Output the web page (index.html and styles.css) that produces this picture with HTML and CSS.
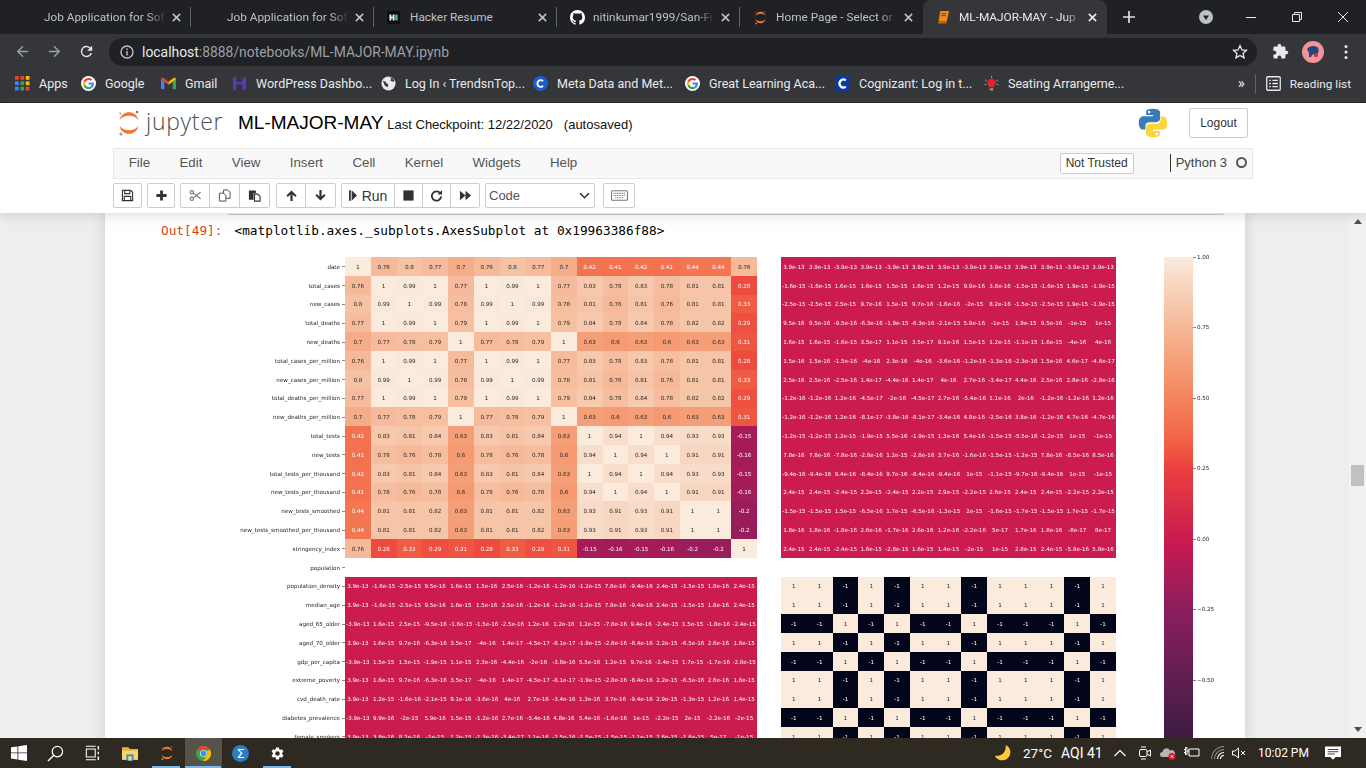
FILE: index.html
```html
<!DOCTYPE html>
<html lang="en">
<head>
<meta charset="utf-8">
<title>ML-MAJOR-MAY - Jupyter Notebook</title>
<link rel="stylesheet" href="styles.css">
</head>
<body>
<svg class="sprite" aria-hidden="true">
  <symbol id="x" viewBox="0 0 12 12"><path d="M2 2l8 8M10 2l-8 8" fill="none" stroke="currentColor" stroke-width="1.7"/></symbol>
  <symbol id="jlogo" viewBox="0 0 24 28"><path d="M2.500 11C4 5.200 8 3.200 12 3.200s8 2 9.500 7.800C19 8 16 6.800 12 6.800S5 8 2.500 11zM2.500 17C4 22.800 8 24.800 12 24.800s8-2 9.500-7.800C19 20 16 21.200 12 21.200S5 20 2.500 17z" fill="#f37726"/><circle cx="20" cy="3" r="1.300" fill="#767677"/><circle cx="3.300" cy="4.500" r=".9" fill="#989798"/><circle cx="4" cy="25" r="1.600" fill="#9e9e9e"/></symbol>
  <symbol id="g" viewBox="-3 -3 24 24"><circle cx="9" cy="9" r="12" fill="#fff"/><path fill="#EA4335" d="M9 3.480c1.690 0 2.830.73 3.480 1.340l2.540-2.480C13.460.89 11.430 0 9 0 5.480 0 2.440 2.020.96 4.960l2.910 2.260C4.600 5.050 6.620 3.480 9 3.480z"/><path fill="#4285F4" d="M17.640 9.200c0-.74-.06-1.280-.19-1.840H9v3.340h4.960c-.1.83-.64 2.080-1.840 2.920l2.840 2.200c1.700-1.570 2.680-3.880 2.680-6.620z"/><path fill="#FBBC05" d="M3.880 10.780A5.540 5.540 0 0 1 3.580 9c0-.62.11-1.220.29-1.780L.96 4.960A9 9 0 0 0 0 9c0 1.450.35 2.820.96 4.040l2.920-2.260z"/><path fill="#34A853" d="M9 18c2.430 0 4.470-.8 5.960-2.180l-2.840-2.200c-.76.53-1.780.9-3.120.9-2.380 0-4.400-1.570-5.120-3.740L.98 13.040C2.460 15.980 5.480 18 9 18z"/></symbol>
  <symbol id="bluec" viewBox="0 0 16 16"><circle cx="8" cy="8" r="8" fill="#1a5fd0"/><path d="M10.800 5.400A3.600 3.600 0 1 0 10.800 10.600" fill="none" stroke="#fff" stroke-width="2"/></symbol>
  <symbol id="gear" viewBox="0 0 24 24"><path fill="currentColor" fill-rule="evenodd" d="M19.140 12.940c.04-.3.06-.61.06-.94 0-.32-.02-.64-.07-.94l2.030-1.580a.49.49 0 0 0 .12-.61l-1.920-3.320a.488.488 0 0 0-.59-.22l-2.390.96c-.5-.38-1.030-.7-1.620-.94l-.36-2.540a.484.484 0 0 0-.48-.41h-3.840c-.24 0-.43.17-.47.41l-.36 2.540c-.59.24-1.130.57-1.620.94l-2.390-.96c-.22-.08-.47 0-.59.22L2.740 8.870c-.12.21-.08.47.12.61l2.030 1.580c-.05.3-.09.63-.09.94s.02.64.07.94l-2.030 1.580a.49.49 0 0 0-.12.61l1.920 3.320c.12.22.37.29.59.22l2.390-.96c.5.38 1.030.7 1.620.94l.36 2.540c.05.24.24.41.48.41h3.840c.24 0 .44-.17.47-.41l.36-2.540c.59-.24 1.130-.56 1.620-.94l2.390.96c.22.08.47 0 .59-.22l1.920-3.320c.12-.22.07-.47-.12-.61l-2.010-1.580zM12 15.600A3.600 3.600 0 1 1 12 8.400a3.600 3.600 0 0 1 0 7.200z"/></symbol>
</svg>

<header class="chrome">
  <div class="tabs">
    <div class="tab"><span class="tab-ico"></span><span class="tab-title">Job Application for Sof</span><svg class="tab-x"><use href="#x"/></svg></div><i class="tab-sep"></i>
    <div class="tab"><span class="tab-ico"></span><span class="tab-title">Job Application for Sof</span><svg class="tab-x"><use href="#x"/></svg></div><i class="tab-sep"></i>
    <div class="tab"><span class="tab-ico"><svg class="ico13" viewBox="0 0 13 13"><rect width="13" height="13" rx="1" fill="#0b0e13"/><path d="M2.500 3.500h1.800v2.200h1.400V3.500h1.800v6H5.700V7.300H4.300v2.200H2.500z" fill="#fff"/><rect x="8.200" y="3.500" width="2.400" height="6" fill="#2fd173"/></svg></span><span class="tab-title nofade">Hacker Resume</span><svg class="tab-x"><use href="#x"/></svg></div><i class="tab-sep"></i>
    <div class="tab"><span class="tab-ico"><svg class="ico16" viewBox="0 0 16 16"><path fill="#fff" d="M8 0C3.580 0 0 3.580 0 8c0 3.540 2.290 6.530 5.470 7.590.4.07.55-.17.55-.38 0-.19-.01-.82-.01-1.490-2.010.37-2.530-.49-2.690-.94-.09-.23-.48-.94-.82-1.130-.28-.15-.68-.52-.01-.53.63-.01 1.080.58 1.230.82.72 1.210 1.870.87 2.330.66.07-.52.28-.87.51-1.070-1.780-.2-3.640-.89-3.640-3.950 0-.87.31-1.590.82-2.150-.08-.2-.36-1.020.08-2.120 0 0 .67-.21 2.200.82.64-.18 1.320-.27 2-.27s1.360.09 2 .27c1.530-1.040 2.200-.82 2.200-.82.44 1.100.16 1.920.08 2.120.51.56.82 1.270.82 2.150 0 3.070-1.870 3.750-3.650 3.950.29.25.54.73.54 1.480 0 1.070-.01 1.930-.01 2.200 0 .21.15.46.55.38A8.013 8.013 0 0 0 16 8c0-4.420-3.580-8-8-8z"/></svg></span><span class="tab-title">nitinkumar1999/San-Fr</span><svg class="tab-x"><use href="#x"/></svg></div><i class="tab-sep"></i>
    <div class="tab"><span class="tab-ico"><svg class="ico16" viewBox="0 0 24 28"><use href="#jlogo"/></svg></span><span class="tab-title">Home Page - Select or</span><svg class="tab-x"><use href="#x"/></svg></div>
    <div class="tab tab-active"><span class="tab-ico"><svg class="ico16" viewBox="0 0 16 16"><path d="M4.500 1h9.500l-2.500 11H2.800z" fill="#f08a1d"/><path d="M2.800 12h8.700l-.5 2.500H3.200a1.300 1.300 0 0 1-.4-2.500z" fill="#c9660e"/><path d="M6 4h5M5.600 6h5" stroke="#5b2c00" stroke-width=".8"/></svg></span><span class="tab-title">ML-MAJOR-MAY - Jup</span><svg class="tab-x"><use href="#x"/></svg></div>
    <svg class="new-tab" viewBox="0 0 12 12"><path d="M6 0v12M0 6h12" stroke="#dee1e6" stroke-width="1.700"/></svg>
    <div class="win">
      <svg class="tab-circle" viewBox="0 0 14 14"><circle cx="7" cy="7" r="7" fill="#bdc1c6"/><path d="M4 5.500h6L7 10z" fill="#202124"/></svg>
      <svg class="win-btn" viewBox="0 0 12 12"><path d="M1 6.500h10" stroke="#e8eaed"/></svg>
      <svg class="win-btn" viewBox="0 0 12 12"><path d="M1.500 3.500h7v7h-7zM3.500 3.500v-2h7v7h-2" fill="none" stroke="#e8eaed"/></svg>
      <svg class="win-btn" viewBox="0 0 12 12"><path d="M1 1l10 10M11 1L1 11" stroke="#e8eaed"/></svg>
    </div>
  </div>
  <div class="navbar">
    <svg class="nav-ico" viewBox="0 0 24 24"><path fill="#9aa0a6" d="M20 11H7.800l5.600-5.600L12 4l-8 8 8 8 1.400-1.400L7.800 13H20z"/></svg>
    <svg class="nav-ico" viewBox="0 0 24 24"><path fill="#9aa0a6" d="M4 11h12.200l-5.600-5.600L12 4l8 8-8 8-1.400-1.400 5.600-5.600H4z"/></svg>
    <svg class="nav-ico" viewBox="0 0 24 24"><path fill="#e8eaed" d="M17.650 6.350A7.950 7.950 0 0 0 12 4a8 8 0 1 0 7.750 10h-2.080A6 6 0 1 1 12 6c1.660 0 3.140.69 4.220 1.780L13 11h7V4z"/></svg>
    <div class="addr">
      <svg class="info" viewBox="0 0 14 14"><circle cx="7" cy="7" r="6" fill="none" stroke="#bdc1c6" stroke-width="1.400"/><path d="M6.300 6h1.400v4.500H6.300zM6.300 3.400h1.400v1.500H6.300z" fill="#bdc1c6"/></svg>
      <span class="url"><b>localhost</b>:8888/notebooks/ML-MAJOR-MAY.ipynb</span>
      <svg class="star" viewBox="0 0 16 16"><path d="M8 1.600l1.900 4.300 4.600.4-3.500 3.100 1.100 4.500L8 11.500l-4.100 2.400L5 9.400 1.500 6.300l4.600-.4z" fill="none" stroke="#e8eaed" stroke-width="1.300"/></svg>
    </div>
    <svg class="puzzle" viewBox="0 0 24 24"><path fill="#e8eaed" d="M20.500 11H19V7a2 2 0 0 0-2-2h-4V3.500a2.500 2.500 0 0 0-5 0V5H4a2 2 0 0 0-2 2v3.800h1.500a2.700 2.700 0 0 1 0 5.400H2V20a2 2 0 0 0 2 2h3.800v-1.500a2.700 2.700 0 0 1 5.400 0V22H17a2 2 0 0 0 2-2v-4h1.500a2.500 2.500 0 0 0 0-5z"/></svg>
    <svg class="avatar" viewBox="0 0 22 22"><circle cx="11" cy="11" r="11" fill="#f4939a"/><path d="M5 8c2-3 7-4 10-2 2 1 2 4 1 6l-1 4h-2l-1-3-2 1-1 2H7V12z" fill="#23467d"/><circle cx="14" cy="14" r="2" fill="#c9334a"/></svg>
    <svg class="dots" viewBox="0 0 4 16"><circle cx="2" cy="2.500" r="1.500" fill="#e8eaed"/><circle cx="2" cy="8" r="1.500" fill="#e8eaed"/><circle cx="2" cy="13.500" r="1.500" fill="#e8eaed"/></svg>
  </div>
  <nav class="bookmarks">
    <a class="bm"><svg class="bm-ico" viewBox="0 0 14 14"><path d="M0 0h3.500v3.500H0z" fill="#ea4335"/><path d="M5 0h3.500v3.500H5z" fill="#ea4335"/><path d="M10 0h3.500v3.500H10z" fill="#fbbc05"/><path d="M0 5h3.500v3.500H0z" fill="#4285f4"/><path d="M5 5h3.500v3.500H5z" fill="#34a853"/><path d="M10 5h3.500v3.500H10z" fill="#fbbc05"/><path d="M0 10h3.500v3.500H0z" fill="#4285f4"/><path d="M5 10h3.500v3.500H5z" fill="#34a853"/><path d="M10 10h3.500v3.500H10z" fill="#ea4335"/></svg>Apps</a>
    <a class="bm"><svg class="bm-ico"><use href="#g"/></svg>Google</a>
    <a class="bm"><svg class="bm-ico" viewBox="0 0 16 14"><path d="M0 2.500L3.500 5v8H1a1 1 0 0 1-1-1z" fill="#4285f4"/><path d="M16 2.500L12.500 5v8H15a1 1 0 0 0 1-1z" fill="#34a853"/><path d="M3.500 5L8 8.400V5.200L3 1.400C1.500.4 0 1.200 0 2.500z" fill="#ea4335"/><path d="M12.500 5L8 8.400V5.200l5-3.800c1.500-1 3-.2 3 1.100z" fill="#fbbc05"/></svg>Gmail</a>
    <a class="bm"><svg class="bm-ico" viewBox="0 0 16 16"><path d="M1 2l3.500-1.500v6H11V3l4-2v13l-4 1.500V9H4.500v5L1 15.500z" fill="#5b3bb3"/></svg>WordPress Dashbo...</a>
    <a class="bm"><svg class="bm-ico" viewBox="0 0 16 16"><circle cx="8" cy="8" r="7.500" fill="#e8eaed"/><path d="M2 5l3 1 1 2 2 1-1 3-3-2zM9 1l2 2-1 2 3 1 1.500-1L12 2z" fill="#35363a"/></svg>Log In ‹ TrendsnTop...</a>
    <a class="bm"><svg class="bm-ico"><use href="#bluec"/></svg>Meta Data and Met...</a>
    <a class="bm"><svg class="bm-ico"><use href="#g"/></svg>Great Learning Aca...</a>
    <a class="bm"><svg class="bm-ico" viewBox="0 0 16 16"><rect width="16" height="16" fill="#0d3a9c"/><path d="M11.500 4.600A4.200 4.200 0 1 0 11.500 11.400" fill="none" stroke="#fff" stroke-width="2.400"/></svg>Cognizant: Log in t...</a>
    <a class="bm"><svg class="bm-ico" viewBox="0 0 16 16"><path d="M8 0v2M1 4l2 1.500M15 4l-2 1.500M.5 9h2M13.500 9h2" stroke="#9aa0a6"/><path d="M8 3a4.500 4.500 0 0 1 2.500 8.200V12h-5v-.8A4.500 4.500 0 0 1 8 3z" fill="#e8202a"/><path d="M6 13h4v2.500H6z" fill="#8a8f94"/></svg>Seating Arrangeme...</a>
    <div class="bm-end">
      <span class="more">»</span><i class="bm-div"></i>
      <a class="bm bm-read"><svg class="bm-ico" viewBox="0 0 14 14"><rect x=".7" y=".7" width="12.600" height="12.600" rx="1" fill="none" stroke="#e8eaed" stroke-width="1.200"/><path d="M3 4h1.500M6 4h5M3 7h1.500M6 7h5M3 10h1.500M6 10h5" stroke="#e8eaed" stroke-width="1.200"/></svg>Reading list</a>
    </div>
  </nav>
</header>

<div class="jp-head">
  <div class="jp-top">
    <svg class="jp-logo"><use href="#jlogo"/></svg>
    <span class="jp-word">jupyter</span>
    <span class="nb-name">ML-MAJOR-MAY</span>
    <span class="nb-ck">Last Checkpoint: 12/22/2020</span>
    <span class="nb-auto">(autosaved)</span>
    <svg class="py-logo" viewBox="0 0 110 110"><path fill="#3a7ab5" d="M54 3C28 3 30 14 30 14v12h25v4H20S3 28 3 54s15 25 15 25h9V67s-.5-15 15-15h25s14 .2 14-14V17S83 3 54 3z"/><circle cx="41" cy="15" r="4.500" fill="#fff"/><path fill="#ffd43b" d="M56 107c26 0 24-11 24-11V84H55v-4h35s17 2 17-24-15-25-15-25h-9v12s.5 15-15 15H43s-14-.2-14 14v21s-2 14 27 14z"/><circle cx="69" cy="95" r="4.500" fill="#fff"/></svg>
    <button class="logout">Logout</button>
  </div>
  <div class="jp-menu">
    <span class="mi">File</span><span class="mi">Edit</span><span class="mi">View</span><span class="mi">Insert</span><span class="mi">Cell</span><span class="mi">Kernel</span><span class="mi">Widgets</span><span class="mi">Help</span>
    <span class="trust">Not Trusted</span>
    <span class="kernel">Python 3</span>
    <i class="k-dot"></i>
  </div>
  <div class="jp-tools">
    <div class="grp"><span class="tb w29"><svg class="ti" viewBox="0 0 14 14"><path d="M1.500 1.500h9l2 2v9h-11zM4 1.500v3.500h5.500V1.500M3.500 12.500V8h7v4.500" fill="none" stroke="#333" stroke-width="1.200"/></svg></span></div>
    <div class="grp"><span class="tb w28"><svg class="ti" viewBox="0 0 14 14"><path d="M5.500 1.500h3v4h4v3h-4v4h-3v-4h-4v-3h4z" fill="#333"/></svg></span></div>
    <div class="grp grp-edit">
      <span class="tb w30"><svg class="ti" viewBox="0 0 14 14"><g fill="none" stroke="#777" stroke-width="1.200"><circle cx="3" cy="3.500" r="1.800"/><circle cx="3" cy="10.500" r="1.800"/><path d="M4.500 4.500l8 6M4.500 9.500l8-6"/></g></svg></span>
      <span class="tb w30"><svg class="ti" viewBox="0 0 14 14"><path d="M6 1h4.500L13 3.500V10H6z" fill="#fff" stroke="#444"/><path d="M1.500 4.500H6L8.500 7v6h-7z" fill="#fff" stroke="#444"/></svg></span>
      <span class="tb w30"><svg class="ti" viewBox="0 0 14 14"><path d="M1 1.500h7.500v3H6v7H1z" fill="#333"/><path d="M7 5.500h3.500L13 8v5H7z" fill="#fff" stroke="#333" stroke-width="1.200"/></svg></span>
    </div>
    <div class="grp">
      <span class="tb w30"><svg class="ti" viewBox="0 0 14 14"><path d="M7 1.500L1.500 7l1.600 1.600L5.800 6v7h2.400V6l2.700 2.600L12.500 7z" fill="#333"/></svg></span>
      <span class="tb w30"><svg class="ti" viewBox="0 0 14 14"><path d="M7 12.500L1.500 7l1.600-1.600L5.800 8V1h2.400v7l2.700-2.600L12.500 7z" fill="#333"/></svg></span>
    </div>
    <div class="grp">
      <span class="tb w54 tb-run"><svg class="ti-run" viewBox="0 0 9 12"><path d="M0 0h2v12H0zM3 0l6 6-6 6z" fill="#333"/></svg>Run</span>
      <span class="tb w28"><svg class="ti" viewBox="0 0 14 14"><path d="M1.500 1.500h11v11h-11z" fill="#333"/></svg></span>
      <span class="tb w28"><svg class="ti" viewBox="0 0 14 14"><path d="M11 4.500A5 5 0 1 0 12 8" fill="none" stroke="#333" stroke-width="2"/><path d="M13 1v5H8z" fill="#333"/></svg></span>
      <span class="tb w29"><svg class="ti" viewBox="0 0 14 14"><path d="M1 2l6 5-6 5zM7 2l6 5-6 5z" fill="#333"/></svg></span>
    </div>
    <div class="grp"><div class="sel"><span>Code</span><svg class="chev" viewBox="0 0 12 8"><path d="M1 1.500l5 5 5-5" fill="none" stroke="#333" stroke-width="1.800"/></svg></div></div>
    <div class="grp grp-kb"><span class="tb w32"><svg class="ti-kb" viewBox="0 0 16 10"><rect x=".5" y=".5" width="15" height="9" rx="1" fill="none" stroke="#777"/><path d="M2.500 3h11M2.500 5h11M4 7.200h8" stroke="#777" stroke-dasharray="1 .6"/></svg></span></div>
  </div>
</div>

<main class="site">
  <div class="nb">
    <div class="prev-input"></div>
    <div class="out-row"><span class="prompt">Out[49]:</span><span class="out-text">&lt;matplotlib.axes._subplots.AxesSubplot at 0x19963386f88&gt;</span></div>
    <div class="figure">
      <div class="heat" id="heat"></div>
      <div class="cbar-wrap">
        <div class="cbar"></div>
        <div class="cticks">
          <span class="ct">1.00</span><span class="ct">0.75</span><span class="ct">0.50</span><span class="ct">0.25</span><span class="ct">0.00</span><span class="ct">−0.25</span><span class="ct">−0.50</span>
        </div>
      </div>
    </div>
  </div>
  <div class="scroll">
    <svg class="sc-arrow" viewBox="0 0 8 5"><path d="M4 0l4 5H0z" fill="#505050"/></svg>
    <div class="sc-track"><div class="sc-thumb"></div></div>
    <svg class="sc-arrow" viewBox="0 0 8 5"><path d="M4 5l4-5H0z" fill="#505050"/></svg>
  </div>
</main>

<footer class="task">
  <div class="t-left">
    <span class="ts"><svg class="t-win" viewBox="0 0 16 16"><path d="M0 2.300l6.500-.9v6.100H0zM7.300 1.300L16 0v7.500H7.300zM0 8.300h6.500v6.200L0 13.600zM7.300 8.300H16V16l-8.700-1.200z" fill="#fff"/></svg></span>
    <span class="ts"><svg class="t-search" viewBox="0 0 18 18"><circle cx="11" cy="7" r="5.500" fill="none" stroke="#fff" stroke-width="1.300"/><path d="M7 11l-6 6" stroke="#fff" stroke-width="1.500"/></svg></span>
    <span class="ts"><svg class="t-view" viewBox="0 0 18 18"><path d="M1.500 4.500h10v9h-10zM1 1.500h11M1 16.500h11" fill="none" stroke="#fff" stroke-width="1.200"/><path d="M15 1v4M15 7.500v3M15 13v4" stroke="#fff" stroke-width="1.600"/></svg></span>
    <span class="ts"><svg class="t-folder" viewBox="0 0 18 16"><path d="M0 1h7l2 2h9v12H0z" fill="#e8b33f"/><path d="M0 5h18v10H0z" fill="#f9d36c"/><path d="M5 9h8v7H5z" fill="#2e8fd6"/><path d="M7 11h4v5H7z" fill="#f9d36c"/></svg></span>
    <span class="ts on"><svg class="t-jup" viewBox="0 0 24 28"><use href="#jlogo"/></svg></span>
    <span class="ts on act"><svg class="t-chrome" viewBox="0 0 18 18"><circle cx="9" cy="9" r="9" fill="#34a853"/><path d="M9 0a9 9 0 0 1 7.800 4.500H9A4.500 4.500 0 0 0 4.800 7.400L1.900 3.500A9 9 0 0 1 9 0z" fill="#ea4335"/><path d="M16.800 4.500A9 9 0 0 1 8.500 18l3.900-6A4.500 4.500 0 0 0 12.500 6z" fill="#fbbc05"/><circle cx="9" cy="9" r="4" fill="#fff"/><circle cx="9" cy="9" r="3.200" fill="#4285f4"/></svg></span>
    <span class="ts"><span class="sigma">Σ</span></span>
    <span class="ts on gear"><svg class="t-gear"><use href="#gear"/></svg></span>
  </div>
  <div class="tray">
    <svg class="moon" viewBox="0 0 20 20"><path d="M13 1a9 9 0 1 1-12 12c5 1 13-2 12-12z" fill="#ffc83d"/></svg>
    <span class="temp">27°C</span><span class="aqi">AQI 41</span>
    <svg class="tr-up" viewBox="0 0 12 12"><path d="M.5 9L6 3.500 11.500 9" fill="none" stroke="#fff" stroke-width="1.200"/></svg>
    <svg class="tr-cam" viewBox="0 0 12 14"><rect x=".5" y="3.500" width="7.500" height="7" rx="1.500" fill="none" stroke="#fff"/><path d="M8 6l3.500-2v6L8 8" fill="none" stroke="#fff"/><path d="M2 1h5M2 13h5" stroke="#fff"/></svg>
    <svg class="tr-cloud" viewBox="0 0 16 14"><path d="M2.500 11a2.500 2.500 0 0 1 0-5 4 4 0 0 1 7.500-1.500A3.500 3.500 0 0 1 13 11z" fill="#b5b5b5"/><circle cx="12" cy="10.500" r="3.500" fill="#e81123"/><path d="M10.700 9.200l2.600 2.600M13.300 9.200l-2.600 2.600" stroke="#fff"/></svg>
    <svg class="tr-pow" viewBox="0 0 16 14"><path d="M0 3.500h1.500M0 6.500h1.500M1.500 1.500h1.500v7H1.500zM3 5h2M5 3h10v7H5z" fill="none" stroke="#fff"/></svg>
    <svg class="tr-wifi" viewBox="0 0 14 14"><path d="M.5 13a12.500 12.500 0 0 1 12.500-12.500M3.500 13A9.500 9.500 0 0 1 13 3.500" fill="none" stroke="#8f8f8f" stroke-width="1.100"/><path d="M6.500 13A6.500 6.500 0 0 1 13 6.500M9.500 13A3.500 3.500 0 0 1 13 9.500" fill="none" stroke="#fff" stroke-width="1.100"/></svg>
    <svg class="tr-snd" viewBox="0 0 14 14"><path d="M.5 5H3l3.500-3v10L3 9H.5z" fill="none" stroke="#fff"/><path d="M9 5l4 4M13 5l-4 4" stroke="#fff"/></svg>
    <span class="clock">10:02 PM</span>
    <svg class="notif" viewBox="0 0 18 16"><path d="M0 0h18v12h-6l-3 3-3-3H0z" fill="#fff"/><path d="M3 3.500h12M3 6h12M3 8.500h8" stroke="#2e2a22"/></svg>
  </div>
</footer>
<script src="script.js"></script>
</body>
</html>
```

FILE: styles.css
```css
* { box-sizing: border-box; }
html, body { margin: 0; height: 100%; overflow: hidden; }
body { display: flex; flex-direction: column; font-family: "Liberation Sans", Arial, sans-serif; background: #eee; }
.sprite { display: none; }
svg { display: block; flex: none; }

/* browser chrome */
.chrome { flex: none; background: #35363a; font-family: Roboto, "Noto Sans", sans-serif; }
.tabs { height: 34px; background: #202124; display: flex; align-items: center; padding-left: 8px; color: #bdc1c6; font-size: 11.800px; }
.tab { width: 183px; height: 34px; display: flex; align-items: center; padding: 0 9px 0 13px; }
.tab-sep { width: 1px; height: 20px; background: #5f6368; margin-left: -1px; flex: none; }
.tab-ico { width: 23px; flex: none; }
.ico13 { width: 13px; height: 13px; }
.ico16 { width: 15px; height: 15px; }
.tab-title { flex: 1; white-space: nowrap; overflow: hidden; min-width: 0; -webkit-mask-image: linear-gradient(90deg, #000 85%, transparent); mask-image: linear-gradient(90deg, #000 85%, transparent); }
.tab-title.nofade { -webkit-mask-image: none; mask-image: none; }
.tab-x { width: 11px; height: 11px; margin-left: 5px; color: #bdc1c6; }
.tab-active { background: #35363a; border-radius: 8px 8px 0 0; color: #e8eaed; width: 184px; }
.tab-active .tab-x { color: #e8eaed; }
.new-tab { width: 12px; height: 12px; margin-left: 16px; }
.win { margin-left: auto; display: flex; align-items: center; }
.tab-circle { width: 14px; height: 14px; margin-right: 32px; }
.win-btn { width: 12px; height: 12px; margin-right: 34px; }
.win-btn:last-child { margin-right: 17px; }

.navbar { height: 35px; display: flex; align-items: center; padding-left: 14px; }
.nav-ico { width: 17px; height: 17px; margin-right: 15px; }
.nav-ico:nth-child(3) { margin-right: 14px; }
.addr { width: 1148px; height: 28px; border-radius: 14px; background: #202124; display: flex; align-items: center; padding: 0 9px 0 11px; }
.info { width: 14px; height: 14px; margin-right: 8px; }
.url { font-size: 13.900px; color: #9aa0a6; white-space: nowrap; }
.url b { font-weight: 400; color: #e8eaed; }
.star { width: 16px; height: 16px; margin-left: auto; }
.puzzle { width: 17px; height: 17px; margin-left: 15px; }
.avatar { width: 22px; height: 22px; margin-left: 13px; }
.dots { width: 4px; height: 16px; margin-left: 20px; }

.bookmarks { height: 34px; display: grid; grid-template-columns: 66px 80px 71px 149px 152px 152px 150px 149px 1fr auto; align-items: center; padding: 0 0 4px 15px; border-bottom: 1px solid #1d1e20; color: #e8eaed; font-size: 12.500px; }
.bm { display: flex; align-items: center; white-space: nowrap; }
.bm-ico { width: 15px; height: 15px; margin-right: 9px; }
.bm-read { font-size: 11.800px; }
.bm-end { display: flex; align-items: center; justify-content: flex-end; padding-right: 15px; }
.more { font-size: 15px; line-height: 15px; margin-right: 10px; }
.bm-div { width: 1px; height: 20px; background: #5f6368; margin-right: 10px; }

/* jupyter header */
.jp-head { flex: none; background: #fff; box-shadow: 0 0 12px 1px rgba(87,87,87,.25); position: relative; z-index: 2; color: #333; }
.jp-top { height: 45px; display: flex; align-items: center; padding: 0 118px 6px 117px; }
.jp-logo { width: 24px; height: 28px; }
.jp-word { font-family: "Open Sans", sans-serif; font-weight: 300; font-size: 23px; letter-spacing: .7px; color: #4e4e4e; margin: -4px 16px 0 5px; width: 76px; }
.nb-name { font-size: 19px; color: #000; }
.nb-ck { font-size: 13px; color: #111; margin-left: 4px; margin-top: 3px; }
.nb-auto { font-size: 13px; color: #111; margin-left: 11px; margin-top: 3px; }
.py-logo { width: 30px; height: 30px; margin-left: auto; }
.logout { margin-left: 21px; width: 59px; height: 30px; background: #fff; border: 1px solid #ccc; border-radius: 2px; font: 12px "Liberation Sans", Arial, sans-serif; color: #333; padding: 0; }
.jp-menu { height: 31px; margin: 0 113px; display: flex; align-items: center; background: #f8f8f8; border: 1px solid #e7e7e7; padding-bottom: 2px; font-size: 13.300px; color: #333; }
.mi { padding: 0 14.700px; color: #555; }
.trust { margin: 1px 0 0 auto; width: 74px; height: 21px; border: 1px solid #ccc; border-radius: 2px; background: #fff; font-size: 12px; line-height: 19px; text-align: center; }
.kernel { margin-left: 36px; padding-left: 5px; border-left: 1px solid #333; line-height: 18px; font-size: 13px; color: #444; }
.k-dot { width: 11px; height: 11px; border-radius: 50%; border: 2px solid #555; margin-left: 9px; margin-right: 5px; }
.jp-tools { height: 34px; margin: 0 113px; display: flex; align-items: flex-start; padding-top: 4px; gap: 5px; }
.grp { display: flex; }
.grp-edit { margin-right: 1px; }
.grp-kb { margin-left: 3px; }
.tb { height: 25px; display: flex; align-items: center; justify-content: center; border: 1px solid #ccc; border-left-width: 0; background: #fff; font-size: 14px; color: #333; }
.grp .tb:first-child { border-left-width: 1px; border-radius: 2px 0 0 2px; }
.grp .tb:last-child { border-radius: 0 2px 2px 0; }
.grp .tb:only-child { border-radius: 2px; }
.w28 { width: 28px; } .w29 { width: 29px; } .w30 { width: 30px; } .w32 { width: 32px; } .w54 { width: 54px; }
.ti { width: 13px; height: 13px; }
.ti-kb { width: 17px; height: 11px; }
.ti-run { width: 8px; height: 11px; margin-right: 5px; }
.sel { width: 110px; height: 25px; border: 1px solid #ccc; border-radius: 2px; display: flex; align-items: center; justify-content: space-between; padding: 0 4px 0 3px; font-size: 13px; color: #555; }
.chev { width: 11px; height: 7px; }

/* notebook */
.site { flex: 1; min-height: 0; display: flex; background: #eee; }
.nb { width: 1140px; margin-left: 105px; background: #fff; box-shadow: 0 0 12px 1px rgba(87,87,87,.2); overflow: hidden; margin-right: auto; }
.prev-input { width: 996px; height: 2px; margin-left: 123px; background: #f7f7f7; border: 1px solid #cfcfcf; border-top: 0; border-radius: 0 0 2px 2px; }
.out-row { display: flex; align-items: center; height: 16px; margin-top: 8px; font: 12.750px/16px "DejaVu Sans Mono", monospace; }
.prompt { margin-left: 56px; width: 73.500px; color: #d84315; }
.out-text { color: #000; }
.figure { display: flex; align-items: flex-start; margin-top: 18px; margin-left: 125px; }
.heat { display: grid; grid-template-columns: 115px repeat(16, 25.750px) 24px repeat(13, 25.770px); grid-auto-rows: 18.800px; font: 5.600px "DejaVu Sans", sans-serif; color: #262626; filter: blur(.3px); }
.c { display: flex; align-items: center; justify-content: center; white-space: nowrap; overflow: hidden; padding-top: 1px; }
.lbl { display: flex; align-items: center; justify-content: flex-end; white-space: nowrap; padding: 1px 5px 0 0; position: relative; }
.lbl::after { content: ""; position: absolute; right: 0; top: 50%; width: 3px; height: 1px; background: #888; }
.dark { color: #262626; }
.light { color: #fff; }
.cbar-wrap { margin-left: 48px; display: flex; font: 5.600px "DejaVu Sans", sans-serif; color: #262626; }
.cbar { width: 29px; height: 481px; background: linear-gradient(180deg, #faebdd 0, #f8d5bf 5.860%, #f6c2a4 11.700%, #f5ac88 17.600%, #f59a73 23.450%, #f4835d 29.300%, #f36f4d 35.200%, #ef5340 41%, #ea4040 44%, #cb1b4f 58.600%, #8c1d5e 73.300%, #5f1f50 87.900%, #3d1b42 100%); }
.cticks { display: flex; flex-direction: column; gap: 61.900px; margin-top: -4px; }
.ct { height: 8.600px; line-height: 8.600px; display: flex; align-items: center; white-space: nowrap; filter: blur(.25px); }
.ct::before { content: ""; width: 3px; height: 1px; background: #888; margin-right: 1px; }

.scroll { flex: none; width: 17px; background: #f1f1f1; display: flex; flex-direction: column; align-items: center; padding: 6px 0 6px; }
.sc-arrow { width: 8px; height: 5px; }
.sc-track { flex: 1; width: 100%; padding: 241px 2px 0; }
.sc-thumb { height: 21px; background: #c1c1c1; }

/* taskbar */
.task { flex: none; height: 30px; background: #2e2a22; display: flex; align-items: stretch; color: #fff; font-family: Roboto, "Noto Sans", sans-serif; position: relative; z-index: 3; }
.t-left { display: flex; }
.ts { width: 37px; display: flex; align-items: center; justify-content: center; position: relative; }
.ts.on::after { content: ""; position: absolute; left: 4px; right: 5px; bottom: 0; height: 2px; background: #76b9ed; }
.ts.act { background: #55524a; }
.ts.act::after { left: 0; right: 1px; }
.t-win { width: 16px; height: 16px; }
.t-search { width: 17px; height: 17px; }
.t-view { width: 16px; height: 16px; }
.t-folder { width: 16px; height: 15px; }
.t-jup { width: 14px; height: 16px; }
.t-chrome { width: 15px; height: 15px; }
.t-gear { width: 15px; height: 15px; }
.gear { color: #fff; }
.sigma { width: 17px; height: 17px; border-radius: 50%; background: #2e7cc0; font: 13px/17px "DejaVu Sans", sans-serif; text-align: center; color: #fff; }
.tray { margin-left: auto; display: flex; align-items: center; }
.moon { width: 18px; height: 18px; margin-right: 11px; }
.temp { width: 38px; font-size: 13.500px; }
.aqi { width: 53px; font-size: 14px; }
.tr-up { width: 12px; height: 12px; margin-right: 13px; }
.tr-cam { width: 12px; height: 14px; margin-right: 9px; }
.tr-cloud { width: 16px; height: 14px; margin-right: 8px; }
.tr-pow { width: 16px; height: 14px; margin-right: 11px; }
.tr-wifi { width: 14px; height: 14px; margin-right: 7px; }
.tr-snd { width: 14px; height: 14px; margin-right: 12px; }
.clock { font-size: 12px; width: 67px; }
.notif { width: 16px; height: 15px; margin-right: 25px; }
```

FILE: script.js
```js
const L1 = {
  date:[1,.76,.8,.77,.7,.76,.8,.77,.7,.42,.41,.42,.41,.44,.44,.76],
  tc:[.76,1,.99,1,.77,1,.99,1,.77,.83,.78,.83,.78,.81,.81,.28],
  nc:[.8,.99,1,.99,.78,.99,1,.99,.78,.81,.76,.81,.76,.81,.81,.33],
  td:[.77,1,.99,1,.79,1,.99,1,.79,.84,.78,.84,.78,.82,.82,.29],
  nd:[.7,.77,.78,.79,1,.77,.78,.79,1,.63,.6,.63,.6,.63,.63,.31],
  tt:[.42,.83,.81,.84,.63,.83,.81,.84,.63,1,.94,1,.94,.93,.93,-.15],
  nt:[.41,.78,.76,.78,.6,.78,.76,.78,.6,.94,1,.94,1,.91,.91,-.16],
  ts:[.44,.81,.81,.82,.63,.81,.81,.82,.63,.93,.91,.93,.91,1,1,-.2],
  si:[.76,.28,.33,.29,.31,.28,.33,.29,.31,-.15,-.16,-.15,-.16,-.2,-.2,1]
};
const topLeft = [L1.date,L1.tc,L1.nc,L1.td,L1.nd,L1.tc,L1.nc,L1.td,L1.nd,L1.tt,L1.nt,L1.tt,L1.nt,L1.ts,L1.ts,L1.si];
const topRight = `3.9e-13 3.9e-13 -3.9e-13 3.9e-13 -3.9e-13 3.9e-13 3.9e-13 -3.9e-13 3.9e-13 3.9e-13 3.9e-13 -3.9e-13 3.9e-13
-1.6e-15 -1.6e-15 1.6e-15 1.6e-15 1.5e-15 1.6e-15 1.2e-15 9.9e-16 3.8e-16 -1.5e-15 -1.6e-15 1.9e-15 -1.9e-15
-2.5e-15 -2.5e-15 2.5e-15 9.7e-16 1.5e-15 9.7e-16 -1.6e-16 -2e-15 8.2e-16 -1.5e-15 -2.5e-15 1.9e-15 -1.9e-15
9.5e-16 9.5e-16 -9.5e-16 -6.3e-16 -1.9e-15 -6.3e-16 -2.1e-15 5.9e-16 -1e-15 1.9e-15 9.5e-16 -1e-15 1e-15
1.6e-15 1.6e-15 -1.6e-15 3.5e-17 1.1e-15 3.5e-17 9.1e-16 1.5e-15 1.2e-15 -1.1e-15 1.6e-15 -4e-16 4e-16
1.5e-16 1.5e-16 -1.5e-16 -4e-16 2.3e-16 -4e-16 -3.6e-16 -1.2e-16 -1.3e-16 -2.3e-16 1.5e-16 4.6e-17 -4.6e-17
2.5e-16 2.5e-16 -2.5e-16 1.4e-17 -4.4e-16 1.4e-17 4e-16 2.7e-16 -3.4e-17 4.4e-16 2.5e-16 2.8e-16 -2.8e-16
-1.2e-16 -1.2e-16 1.2e-16 -4.5e-17 -2e-16 -4.5e-17 2.7e-16 -5.4e-16 1.1e-16 2e-16 -1.2e-16 -1.2e-16 1.2e-16
-1.2e-16 -1.2e-16 1.2e-16 -8.1e-17 -3.8e-16 -8.1e-17 -3.4e-16 4.8e-16 -2.5e-16 3.8e-16 -1.2e-16 4.7e-16 -4.7e-16
-1.2e-15 -1.2e-15 1.2e-15 -1.9e-15 5.5e-16 -1.9e-15 1.3e-16 5.4e-16 -1.5e-15 -5.5e-16 -1.2e-15 1e-15 -1e-15
7.8e-16 7.8e-16 -7.8e-16 -2.8e-16 1.2e-15 -2.8e-16 3.7e-16 -1.6e-16 -1.5e-15 -1.2e-15 7.8e-16 -8.5e-16 8.5e-16
-9.4e-16 -9.4e-16 9.4e-16 -8.4e-16 9.7e-16 -8.4e-16 -9.4e-16 1e-15 -1.1e-15 -9.7e-16 -9.4e-16 1e-15 -1e-15
2.4e-15 2.4e-15 -2.4e-15 2.2e-15 -2.4e-15 2.2e-15 2.9e-15 -2.2e-15 2.6e-15 2.4e-15 2.4e-15 -2.2e-15 2.2e-15
-1.5e-15 -1.5e-15 1.5e-15 -6.5e-16 1.7e-15 -6.5e-16 -1.3e-15 2e-15 -1.6e-15 -1.7e-15 -1.5e-15 1.7e-15 -1.7e-15
1.8e-16 1.8e-16 -1.8e-16 2.6e-16 -1.7e-16 2.6e-16 1.2e-16 -2.2e-16 5e-17 1.7e-16 1.8e-16 -8e-17 8e-17
2.4e-15 2.4e-15 -2.4e-15 1.6e-15 -2.8e-15 1.6e-15 1.4e-15 -2e-15 1e-15 2.8e-15 2.4e-15 -5.8e-16 5.8e-16`.split("\n").map(r => r.split(" "));
const botLeft = `3.9e-13 -1.6e-15 -2.5e-15 9.5e-16 1.6e-15 1.5e-16 2.5e-16 -1.2e-16 -1.2e-16 -1.2e-15 7.8e-16 -9.4e-16 2.4e-15 -1.5e-15 1.8e-16 2.4e-15
3.9e-13 -1.6e-15 -2.5e-15 9.5e-16 1.6e-15 1.5e-16 2.5e-16 -1.2e-16 -1.2e-16 -1.2e-15 7.8e-16 -9.4e-16 2.4e-15 -1.5e-15 1.8e-16 2.4e-15
-3.9e-13 1.6e-15 2.5e-15 -9.5e-16 -1.6e-15 -1.5e-16 -2.5e-16 1.2e-16 1.2e-16 1.2e-15 -7.8e-16 9.4e-16 -2.4e-15 1.5e-15 -1.8e-16 -2.4e-15
3.9e-13 1.6e-15 9.7e-16 -6.3e-16 3.5e-17 -4e-16 1.4e-17 -4.5e-17 -8.1e-17 -1.9e-15 -2.8e-16 -8.4e-16 2.2e-15 -6.5e-16 2.6e-16 1.6e-15
-3.9e-13 1.5e-15 1.5e-15 -1.9e-15 1.1e-15 2.3e-16 -4.4e-16 -2e-16 -3.8e-16 5.5e-16 1.2e-15 9.7e-16 -2.4e-15 1.7e-15 -1.7e-16 -2.8e-15
3.9e-13 1.6e-15 9.7e-16 -6.3e-16 3.5e-17 -4e-16 1.4e-17 -4.5e-17 -8.1e-17 -1.9e-15 -2.8e-16 -8.4e-16 2.2e-15 -6.5e-16 2.6e-16 1.6e-15
3.9e-13 1.2e-15 -1.6e-16 -2.1e-15 9.1e-16 -3.6e-16 4e-16 2.7e-16 -3.4e-16 1.3e-16 3.7e-16 -9.4e-16 2.9e-15 -1.3e-15 1.2e-16 1.4e-15
-3.9e-13 9.9e-16 -2e-15 5.9e-16 1.5e-15 -1.2e-16 2.7e-16 -5.4e-16 4.8e-16 5.4e-16 -1.6e-16 1e-15 -2.2e-15 2e-15 -2.2e-16 -2e-15
3.9e-13 3.8e-16 8.2e-16 -1e-15 1.2e-15 -1.3e-16 -3.4e-17 1.1e-16 -2.5e-16 -1.5e-15 -1.5e-15 -1.1e-15 2.6e-15 -1.6e-15 5e-17 -1e-15`.split("\n").map(r => r.split(" "));
const labels = ["date","total_cases","new_cases","total_deaths","new_deaths","total_cases_per_million","new_cases_per_million","total_deaths_per_million","new_deaths_per_million","total_tests","new_tests","total_tests_per_thousand","new_tests_per_thousand","new_tests_smoothed","new_tests_smoothed_per_thousand","stringency_index","population","population_density","median_age","aged_65_older","aged_70_older","gdp_per_capita","extreme_poverty","cvd_death_rate","diabetes_prevalence","female_smokers"];
const sign = [1,1,-1,1,-1,1,1,-1,1,1,1,-1,1];
const rowSign = [1,1,-1,1,-1,1,1,-1,1];
const stops = [[1,[250,235,221]],[.9,[248,213,191]],[.8,[246,194,164]],[.7,[245,172,136]],[.6,[245,154,115]],[.5,[244,131,93]],[.4,[243,111,77]],[.3,[239,83,64]],[.25,[234,64,64]],[0,[203,27,79]],[-.25,[140,29,94]],[-.5,[95,31,80]],[-1,[3,5,26]]];
function color(v) {
  for (let i = 1; i < stops.length; i++) {
    if (v >= stops[i][0]) {
      const [a, ca] = stops[i - 1], [b, cb] = stops[i], t = (v - b) / (a - b);
      return "rgb(" + ca.map((c, k) => Math.round(cb[k] + (c - cb[k]) * t)).join(",") + ")";
    }
  }
  return "rgb(3,5,26)";
}
const heat = document.getElementById("heat");
function add(cls, text, v) {
  const d = document.createElement("div");
  d.className = cls;
  if (text !== undefined) d.textContent = text;
  if (v !== undefined) d.style.background = color(v);
  heat.appendChild(d);
}
function num(v, tiny) {
  const val = tiny ? 0 : v;
  add("c " + (val > .5 ? "dark" : "light"), String(v), val);
}
labels.forEach((name, r) => {
  add("lbl", name);
  if (r < 16) {
    topLeft[r].forEach(v => num(v));
    add("c");
    topRight[r].forEach(v => num(v, true));
  } else if (r === 16) {
    for (let i = 0; i < 30; i++) add("c");
  } else {
    botLeft[r - 17].forEach(v => num(v, true));
    add("c");
    sign.forEach(s => num(s * rowSign[r - 17]));
  }
});
```
